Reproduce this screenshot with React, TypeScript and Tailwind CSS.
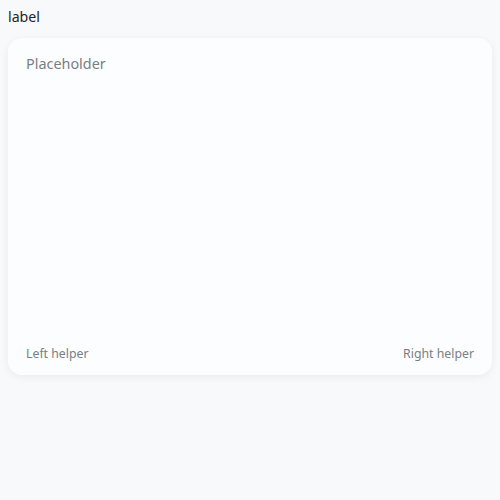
const App = () => {
  return (
    <div
      className="min-h-[500px] w-full bg-[#f8f9fa] px-2 pt-[7px]"
      style={{ fontFamily: '"Noto Sans", "Open Sans", sans-serif' }}
    >
      <label className="block text-[14.2px] leading-[20px] text-[#1f2328]">label</label>
      <div className="mt-[11px] flex h-[337px] flex-col justify-between rounded-[14px] bg-[#fcfdfe] px-[18px] pt-[16px] pb-[13px] shadow-[0_2px_8px_rgba(0,0,0,0.06)]">
        <div className="text-[14.4px] leading-[20px] text-[#7a7d82]">Placeholder</div>
        <div className="flex items-center justify-between text-[12.3px] leading-[16px] text-[#7a7d82]">
          <span>Left helper</span>
          <span>Right helper</span>
        </div>
      </div>
    </div>
  );
};

export default App;
